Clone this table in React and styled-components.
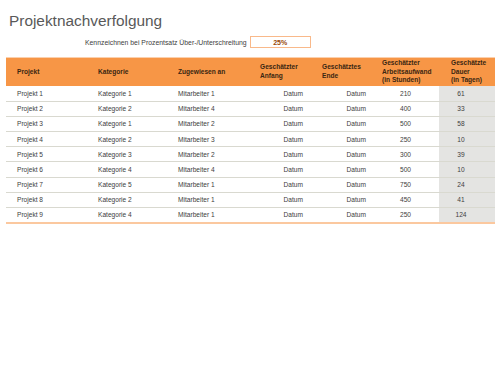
import React from "react";
import styled, { createGlobalStyle } from "styled-components";

const GlobalStyle = createGlobalStyle`
  body {
    margin: 0;
    background: #ffffff;
    font-family: "Liberation Sans", Arial, sans-serif;
  }
`;

const Page = styled.div`
  width: 498px;
  height: 382px;
  padding: 11px 0 0 6px;
  box-sizing: border-box;
`;

const Title = styled.h1`
  margin: 0 0 0 3px;
  font-size: 15.4px;
  font-weight: 400;
  line-height: 20px;
  color: #595959;
`;

const ThresholdRow = styled.div`
  display: flex;
  align-items: center;
  gap: 3px;
  margin: 5px 0 0 79px;
  height: 12px;
`;

const ThresholdLabel = styled.span`
  font-size: 6.85px;
  color: #404040;
`;

const ThresholdBox = styled.div`
  width: 61px;
  height: 12px;
  box-sizing: border-box;
  border: 1px solid #f9b98a;
  display: flex;
  align-items: center;
  justify-content: center;
  font-size: 7px;
  font-weight: 700;
  color: #974706;
`;

const Table = styled.table`
  margin-top: 9px;
  width: 489px;
  border-collapse: collapse;
  table-layout: fixed;
  border-bottom: 2px solid #fbc89f;
`;

const HeadCell = styled.th`
  height: 28px;
  padding: 0 0 0 ${({ $pl }) => $pl || 10}px;
  background: #f79646;
  border-top: 1px solid #fbd0ad;
  text-align: left;
  vertical-align: middle;
  font-size: 6.6px;
  line-height: 8.6px;
  font-weight: 700;
  color: #3a2612;
`;

const Row = styled.tr`
  height: 15.2px;
  border-top: 1.5px solid #d9d9d0;

  &:first-child {
    border-top: none;
  }
`;

const Cell = styled.td`
  padding: 0 ${({ $pr }) => $pr || 0}px 0 ${({ $pl }) => $pl ?? 10}px;
  text-align: ${({ $align }) => $align || "left"};
  background: ${({ $shaded }) => ($shaded ? "#e4e4e2" : "transparent")};
  font-size: 6.6px;
  color: #404040;
  white-space: nowrap;
  vertical-align: middle;
`;

const columns = [
  { w: 82, label: ["Projekt"], pl: 11 },
  { w: 80, label: ["Kategorie"] },
  { w: 82, label: ["Zugewiesen an"] },
  { w: 62, label: ["Geschätzter", "Anfang"] },
  { w: 60, label: ["Geschätztes", "Ende"] },
  { w: 67, label: ["Geschätzter", "Arbeitsaufwand", "(in Stunden)"] },
  { w: 56, label: ["Geschätzte", "Dauer", "(in Tagen)"], pl: 12 },
];

const rows = [
  ["Projekt 1", "Kategorie 1", "Mitarbeiter 1", 210, 61],
  ["Projekt 2", "Kategorie 2", "Mitarbeiter 4", 400, 33],
  ["Projekt 3", "Kategorie 1", "Mitarbeiter 2", 500, 58],
  ["Projekt 4", "Kategorie 2", "Mitarbeiter 3", 250, 10],
  ["Projekt 5", "Kategorie 3", "Mitarbeiter 2", 300, 39],
  ["Projekt 6", "Kategorie 4", "Mitarbeiter 4", 500, 10],
  ["Projekt 7", "Kategorie 5", "Mitarbeiter 1", 750, 24],
  ["Projekt 8", "Kategorie 2", "Mitarbeiter 1", 450, 41],
  ["Projekt 9", "Kategorie 4", "Mitarbeiter 1", 250, 124],
];

export default function App() {
  return (
    <Page>
      <GlobalStyle />
      <Title>Projektnachverfolgung</Title>
      <ThresholdRow>
        <ThresholdLabel>Kennzeichnen bei Prozentsatz Über-/Unterschreitung</ThresholdLabel>
        <ThresholdBox>25%</ThresholdBox>
      </ThresholdRow>
      <Table>
        <colgroup>
          {columns.map((c, i) => (
            <col key={i} style={{ width: c.w }} />
          ))}
        </colgroup>
        <thead>
          <tr>
            {columns.map((c, i) => (
              <HeadCell key={i} $pl={c.pl}>
                {c.label.map((l, j) => (
                  <React.Fragment key={j}>
                    {j > 0 && <br />}
                    {l}
                  </React.Fragment>
                ))}
              </HeadCell>
            ))}
          </tr>
        </thead>
        <tbody>
          {rows.map((r) => (
            <Row key={r[0]}>
              <Cell $pl={11}>{r[0]}</Cell>
              <Cell>{r[1]}</Cell>
              <Cell>{r[2]}</Cell>
              <Cell $align="right" $pr={9}>Datum</Cell>
              <Cell $align="right" $pr={6}>Datum</Cell>
              <Cell $align="center" $pl={0}>{r[3]}</Cell>
              <Cell $align="center" $pl={0} $pr={12} $shaded>{r[4]}</Cell>
            </Row>
          ))}
        </tbody>
      </Table>
    </Page>
  );
}
